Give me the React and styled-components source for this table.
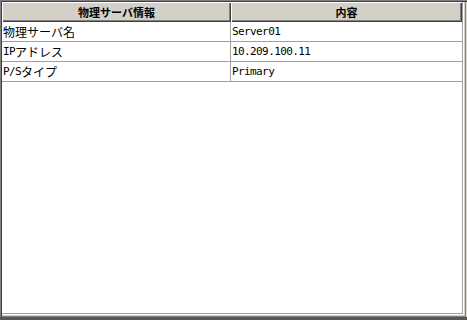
import React from "react";
import styled, { createGlobalStyle } from "styled-components";

const Global = createGlobalStyle`
  html, body { margin: 0; padding: 0; background: #5c5850; }
  #root { width: 467px; height: 320px; }
`;

const Page = styled.div`
  width: 467px;
  height: 320px;
  display: flex;
  flex-direction: column;
  background: #5c5850;
`;

/* sunken well holding the property grid */
const Panel = styled.div`
  width: 467px;
  height: 317px;
  box-sizing: border-box;
  padding: 2px 5px 4px 2px;
  background: #ffffff;
  box-shadow:
    inset 1px 1px 0 #808080,
    inset 2px 2px 0 #404040,
    inset -1px 0 0 #dcd8d0,
    inset -2px -1px 0 #808080,
    inset -3px -2px 0 #d4d0c8,
    inset -4px -3px 0 #ffffff,
    inset -5px -4px 0 #a0a0a0;
`;

const Grid = styled.div`
  display: grid;
  grid-template-columns: 229px 1fr;
  grid-auto-rows: 20px;
`;

const HeadCell = styled.div`
  box-sizing: border-box;
  display: flex;
  align-items: center;
  justify-content: center;
  background: #d4d0c8;
  box-shadow:
    inset 1px 1px 0 #ffffff,
    inset -1px -1px 0 #404040,
    inset -2px -2px 0 #808080;
  font-family: "Noto Sans CJK JP", sans-serif;
  font-weight: 700;
  font-size: 11px;
  color: #000;
`;

const Cell = styled.div`
  box-sizing: border-box;
  display: flex;
  align-items: center;
  padding-left: 1px;
  border-bottom: 1px solid #a0a0a0;
  border-right: ${(p) => (p.$first ? "1px solid #a0a0a0" : "none")};
  font-family: "Noto Sans CJK JP", sans-serif;
  font-size: 12px;
  color: #000;
  white-space: nowrap;
  overflow: hidden;
`;

/* half-width latin characters */
const Latin = styled.span`
  font-family: "DejaVu Sans Mono", monospace;
  font-size: 11px;
  letter-spacing: -0.6px;
`;

const rows = [
  { name: [["物理サーバ名", false]], value: "Server01" },
  { name: [["IP", true], ["アドレス", false]], value: "10.209.100.11" },
  { name: [["P/S", true], ["タイプ", false]], value: "Primary" },
];

export default function App() {
  return (
    <Page>
      <Global />
      <Panel>
        <Grid>
          <HeadCell>物理サーバ情報</HeadCell>
          <HeadCell>内容</HeadCell>
          {rows.map((r, i) => (
            <React.Fragment key={i}>
              <Cell $first>
                {r.name.map(([t, latin], j) =>
                  latin ? <Latin key={j}>{t}</Latin> : <span key={j}>{t}</span>
                )}
              </Cell>
              <Cell>
                <Latin>{r.value}</Latin>
              </Cell>
            </React.Fragment>
          ))}
        </Grid>
      </Panel>
    </Page>
  );
}
